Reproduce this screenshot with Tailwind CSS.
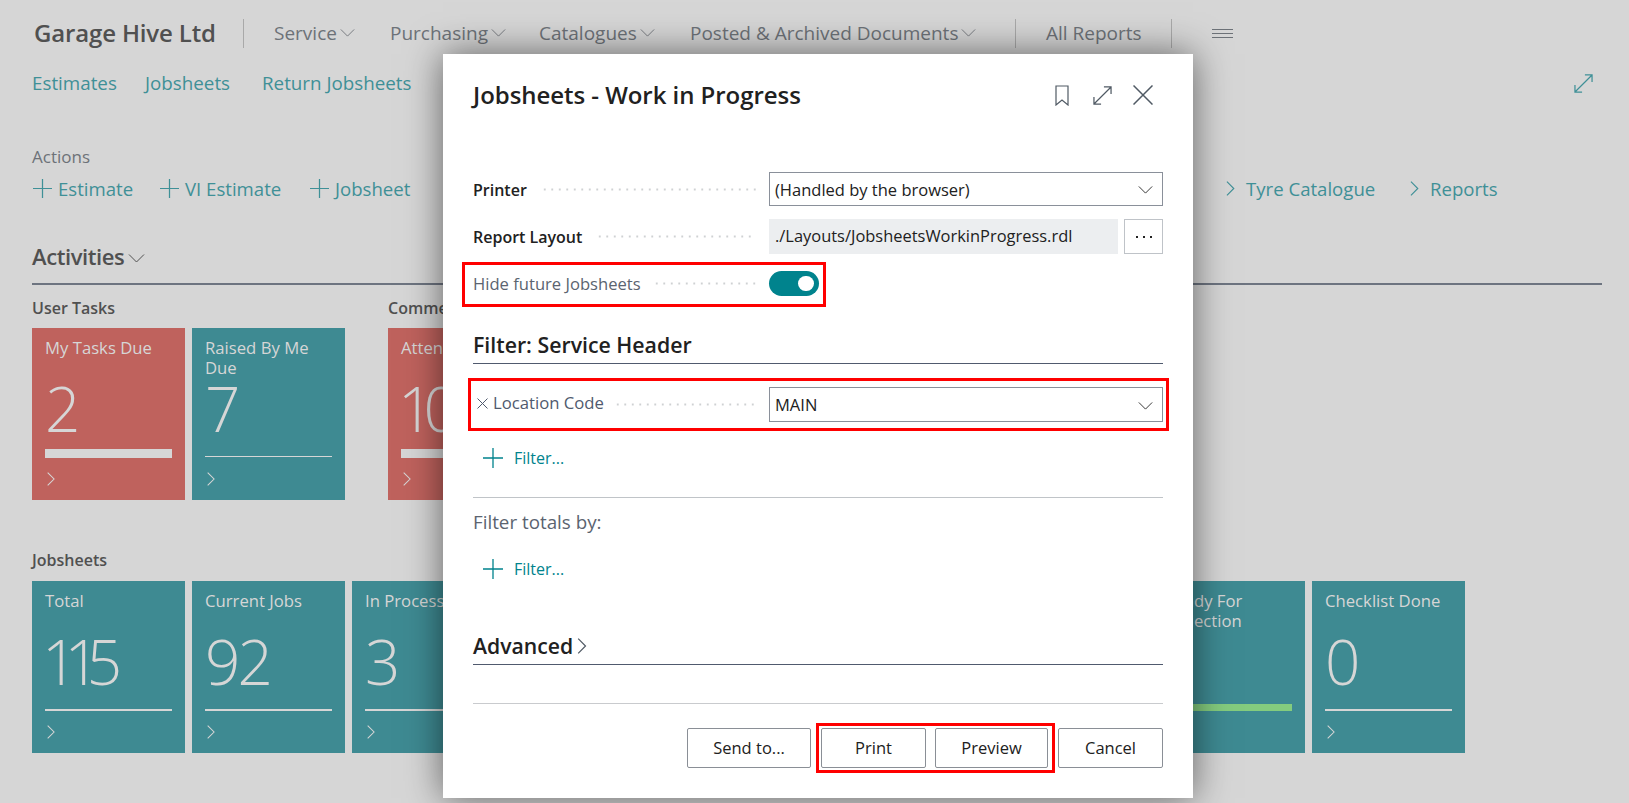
<!DOCTYPE html>
<html lang="en">
<head>
  <meta charset="utf-8">
  <title>Jobsheets - Work in Progress</title>
  <script src="https://cdn.jsdelivr.net/npm/@tailwindcss/browser@4"></script>
</head>
<body class="bg-[#d6d6d6] font-['Open_Sans','Noto_Sans',sans-serif] overflow-hidden">
  <!-- shared icons -->
  <svg class="hidden">
    <symbol id="down" viewBox="0 0 16 9"><path d="M.5.5 8 8 15.500.5" fill="none" stroke="currentColor"/></symbol>
    <symbol id="right" viewBox="0 0 9 16"><path d="M.7.7 8 8 .7 15.300" fill="none" stroke="currentColor" stroke-width="1.200"/></symbol>
    <symbol id="plus" viewBox="0 0 20 20"><path d="M10 0v20M0 10h20" fill="none" stroke="currentColor" stroke-width="1.300"/></symbol>
    <symbol id="expand" viewBox="0 0 20 20"><path d="M1 19 19 1M11.500 1H19v7.500M1 11.500V19h7.500" fill="none" stroke="currentColor" stroke-width="1.300"/></symbol>
  </svg>

  <div class="relative w-[1629px] h-[803px] overflow-hidden">
    <!-- Top bar -->
    <div class="h-[66px] flex items-center pl-[34px] text-[19px] text-[#6d7278]">
      <div class="w-[209px] text-[24px] font-semibold text-[#505050] tracking-[-0.15px]">Garage Hive Ltd</div>
      <div class="w-px h-[29px] bg-[#a9a9a9] mr-[30px]"></div>
      <div class="w-[116px] flex items-center gap-[3px]">Service<svg class="w-[15px] h-[8px]"><use href="#down"/></svg></div>
      <div class="w-[149px] flex items-center gap-[3px]">Purchasing<svg class="w-[15px] h-[8px]"><use href="#down"/></svg></div>
      <div class="w-[151px] flex items-center gap-[3px]">Catalogues<svg class="w-[15px] h-[8px]"><use href="#down"/></svg></div>
      <div class="w-[325px] flex items-center gap-[3px]">Posted &amp; Archived Documents<svg class="w-[15px] h-[8px]"><use href="#down"/></svg></div>
      <div class="w-px h-[29px] bg-[#a9a9a9] mr-[30px]"></div>
      <div class="w-[125px]">All Reports</div>
      <div class="w-px h-[29px] bg-[#a9a9a9] mr-[40px]"></div>
      <div class="flex flex-col gap-[3px] w-[21px]">
        <div class="h-px bg-[#6d7278]"></div><div class="h-px bg-[#6d7278]"></div><div class="h-px bg-[#6d7278]"></div>
      </div>
    </div>

    <!-- Navigation -->
    <div class="h-[34px] flex items-center pl-[32px] pr-[36px] text-[18.800px] text-[#3f9097]">
      <div class="w-[113px]">Estimates</div>
      <div class="w-[117px]">Jobsheets</div>
      <div>Return Jobsheets</div>
      <svg class="ml-auto w-[19px] h-[19px]"><use href="#expand"/></svg>
    </div>

    <!-- Actions -->
    <div class="pl-[32px] pt-[45px] text-[17px] leading-[24px] text-[#6d7278]">Actions</div>
    <div class="h-[36px] mt-[2px] flex items-center pl-[33px] text-[18.600px] text-[#3f9097]">
      <div class="w-[1193px] flex items-center">
        <div class="w-[127px] flex items-center gap-[6px]"><svg class="w-[19px] h-[19px]"><use href="#plus"/></svg>Estimate</div>
        <div class="w-[150px] flex items-center gap-[6px]"><svg class="w-[19px] h-[19px]"><use href="#plus"/></svg>VI Estimate</div>
        <div class="flex items-center gap-[6px]"><svg class="w-[19px] h-[19px]"><use href="#plus"/></svg>Jobsheet</div>
      </div>
      <div class="w-[184px] flex items-center gap-[11px]"><svg class="w-[9px] h-[15px]"><use href="#right"/></svg>Tyre Catalogue</div>
      <div class="flex items-center gap-[11px]"><svg class="w-[9px] h-[15px]"><use href="#right"/></svg>Reports</div>
    </div>

    <!-- Activities -->
    <div class="mx-[32px] w-[1570px] h-[52px] mt-[26px] flex items-end gap-[4px] border-b-2 border-[#6d7480] pb-[12px] text-[22px] leading-[30px] font-semibold text-[#505050]">
      <span class="tracking-[-0.4px]">Activities</span><svg class="w-[17px] h-[9px] mb-[8px] font-normal"><use href="#down"/></svg>
    </div>

    <div class="pl-[32px] flex mt-[13px] text-[#d6d6d6]">
      <div class="w-[356px]">
        <div class="h-[20px] leading-[20px] text-[16px] font-semibold text-[#505050] mb-[10px]">User Tasks</div>
        <div class="flex gap-[7px]">
          <div class="w-[153px] h-[172px] bg-[#bf625d] px-[13px] pt-[10px]">
            <div class="h-[40px] text-[16.700px] leading-[20px]">My Tasks Due</div>
            <div class="h-[70px] text-[62px] leading-[60px] font-light">2</div>
            <div class="h-[10px] flex items-end"><div class="h-[9px] w-full bg-[#d6d6d6]"></div></div>
            <svg class="w-[8px] h-[14px] mt-[14px] ml-[2px]"><use href="#right"/></svg>
          </div>
          <div class="w-[153px] h-[172px] bg-[#3e8a92] px-[13px] pt-[10px]">
            <div class="h-[40px] text-[16.700px] leading-[20px]">Raised By Me Due</div>
            <div class="h-[70px] text-[62px] leading-[60px] font-light">7</div>
            <div class="h-[10px] flex items-end"><div class="h-px w-full bg-[#d6d6d6] mb-[1px]"></div></div>
            <svg class="w-[8px] h-[14px] mt-[14px] ml-[2px]"><use href="#right"/></svg>
          </div>
        </div>
      </div>
      <div>
        <div class="h-[20px] leading-[20px] text-[16px] font-semibold text-[#505050] mb-[10px]">Commercial</div>
        <div class="w-[153px] h-[172px] bg-[#bf625d] px-[13px] pt-[10px]">
          <div class="h-[40px] text-[16.700px] leading-[20px]">Attention</div>
          <div class="h-[70px] text-[62px] leading-[60px] font-light tracking-[-10px] -ml-[3px]">10</div>
          <div class="h-[10px] flex items-end"><div class="h-[9px] w-full bg-[#d6d6d6]"></div></div>
          <svg class="w-[8px] h-[14px] mt-[14px] ml-[2px]"><use href="#right"/></svg>
        </div>
      </div>
    </div>

    <div class="pl-[32px] mt-[50px] text-[#d6d6d6]">
      <div class="h-[20px] leading-[20px] text-[16px] font-semibold text-[#505050] mb-[11px]">Jobsheets</div>
      <div class="flex gap-[7px]">
        <div class="w-[153px] h-[172px] bg-[#3e8a92] px-[13px] pt-[10px]">
          <div class="h-[40px] text-[16.700px] leading-[20px]">Total</div>
          <div class="h-[70px] text-[62px] leading-[60px] font-light tracking-[-13px] -ml-[3px]">115</div>
          <div class="h-[10px] flex items-end"><div class="h-[2px] w-full bg-[#d6d6d6]"></div></div>
          <svg class="w-[8px] h-[14px] mt-[14px] ml-[2px]"><use href="#right"/></svg>
        </div>
        <div class="w-[153px] h-[172px] bg-[#3e8a92] px-[13px] pt-[10px]">
          <div class="h-[40px] text-[16.700px] leading-[20px]">Current Jobs</div>
          <div class="h-[70px] text-[62px] leading-[60px] font-light tracking-[-3px]">92</div>
          <div class="h-[10px] flex items-end"><div class="h-[2px] w-full bg-[#d6d6d6]"></div></div>
          <svg class="w-[8px] h-[14px] mt-[14px] ml-[2px]"><use href="#right"/></svg>
        </div>
        <div class="w-[153px] h-[172px] bg-[#3e8a92] px-[13px] pt-[10px]">
          <div class="h-[40px] text-[16.700px] leading-[20px]">In Process</div>
          <div class="h-[70px] text-[62px] leading-[60px] font-light">3</div>
          <div class="h-[10px] flex items-end"><div class="h-[2px] w-full bg-[#d6d6d6]"></div></div>
          <svg class="w-[8px] h-[14px] mt-[14px] ml-[2px]"><use href="#right"/></svg>
        </div>
        <!-- tiles hidden behind the dialog -->
        <div class="w-[153px] h-[172px] bg-[#3e8a92]"></div>
        <div class="w-[153px] h-[172px] bg-[#3e8a92]"></div>
        <div class="w-[153px] h-[172px] bg-[#3e8a92]"></div>
        <div class="w-[153px] h-[172px] bg-[#3e8a92]"></div>
        <div class="w-[153px] h-[172px] bg-[#3e8a92] px-[13px] pt-[10px]">
          <div class="h-[40px] text-[16.700px] leading-[20px]">Ready For Collection</div>
          <div class="h-[70px]"></div>
          <div class="h-[10px] flex items-end"><div class="h-[7px] w-full bg-[#84cc7e]"></div></div>
          <svg class="w-[8px] h-[14px] mt-[14px] ml-[2px]"><use href="#right"/></svg>
        </div>
        <div class="w-[153px] h-[172px] bg-[#3e8a92] px-[13px] pt-[10px]">
          <div class="h-[40px] text-[16.700px] leading-[20px]">Checklist Done</div>
          <div class="h-[70px] text-[62px] leading-[60px] font-light">0</div>
          <div class="h-[10px] flex items-end"><div class="h-[2px] w-full bg-[#d6d6d6]"></div></div>
          <svg class="w-[8px] h-[14px] mt-[14px] ml-[2px]"><use href="#right"/></svg>
        </div>
      </div>
    </div>

    <!-- Dialog -->
    <div class="absolute left-[443px] top-[54px] w-[750px] h-[744px] bg-white shadow-[0_0_35px_rgba(0,0,0,0.55)] px-[30px] text-[#212121]">
      <div class="h-[80px] pt-[2px] flex items-center">
        <div class="text-[24px] font-semibold tracking-[-0.05px]">Jobsheets - Work in Progress</div>
        <div class="ml-auto flex items-center text-[#505a64]">
          <svg class="w-[14px] h-[21px]" viewBox="0 0 14 21"><path d="M1 1h12v19l-6-5-6 5z" fill="none" stroke="currentColor" stroke-width="1.200"/></svg>
          <svg class="w-[19px] h-[19px] ml-[24px]"><use href="#expand"/></svg>
          <svg class="w-[20px] h-[20px] ml-[21px] mr-[10px]" viewBox="0 0 20 20"><path d="M.5.5l19 19M19.500.5l-19 19" fill="none" stroke="currentColor" stroke-width="1.500"/></svg>
        </div>
      </div>

      <div class="mt-[38px] h-[34px] flex items-center text-[16px]">
        <div class="font-semibold pt-[2px]">Printer</div>
        <div class="flex-1 h-[3px] ml-[14px] mr-[13px] bg-[radial-gradient(circle,#cfd1d3_1px,transparent_1.200px)] bg-[length:7.500px_3px]"></div>
        <div class="w-[394px] h-[34px] border border-[#8a909a] flex items-center px-[5px] pt-[2px] text-[16.500px]">(Handled by the browser)<svg class="ml-auto mr-[4px] w-[15px] h-[8px]"><use href="#down"/></svg></div>
      </div>
      <div class="mt-[13px] h-[35px] flex items-center text-[16px]">
        <div class="font-semibold">Report Layout</div>
        <div class="flex-1 h-[3px] ml-[14px] mr-[13px] bg-[radial-gradient(circle,#cfd1d3_1px,transparent_1.200px)] bg-[length:7.500px_3px]"></div>
        <div class="w-[349px] h-[35px] bg-[#eceef0] flex items-center px-[6px] text-[16.450px]">./Layouts/JobsheetsWorkinProgress.rdl</div>
        <div class="w-[39px] h-[35px] ml-[6px] border border-[#bfc3c8] flex items-center justify-center gap-[5px]">
          <i class="w-[2px] h-[2px] bg-[#212121]"></i><i class="w-[2px] h-[2px] bg-[#212121]"></i><i class="w-[2px] h-[2px] bg-[#212121]"></i>
        </div>
      </div>
      <div class="mt-[17px] h-[25px] flex items-center text-[16.600px] text-[#5b6470]">
        <div class="pt-[2px]">Hide future Jobsheets</div>
        <div class="flex-1 h-[3px] ml-[12px] mr-[13px] bg-[radial-gradient(circle,#cfd1d3_1px,transparent_1.200px)] bg-[length:7.500px_3px]"></div>
        <div class="w-[394px]">
          <div class="w-[50px] h-[25px] rounded-full bg-[#00838d] flex items-center justify-end pr-[5px]"><div class="w-[16px] h-[15px] rounded-full bg-white"></div></div>
        </div>
      </div>

      <div class="mt-[32px] h-[36px] pt-[4px] border-b border-[#505a6e] text-[21.300px] leading-[26px] font-semibold">Filter: Service Header</div>

      <div class="mt-[23px] h-[35px] flex items-center text-[16.700px] text-[#505a6e]">
        <svg class="w-[11px] h-[11px] ml-[4px] mr-[5px] -mt-[3px]" viewBox="0 0 11 11"><path d="M.5.5l10 10M10.500.5l-10 10" fill="none" stroke="currentColor"/></svg>
        <div class="-mt-[3px]">Location Code</div>
        <div class="flex-1 h-[3px] ml-[10px] mr-[13px] bg-[radial-gradient(circle,#cfd1d3_1px,transparent_1.200px)] bg-[length:7.500px_3px]"></div>
        <div class="w-[394px] h-[35px] border border-[#8a909a] flex items-center px-[5px] pt-[2px] text-[16.500px] text-[#212121]">MAIN<svg class="ml-auto mr-[4px] w-[15px] h-[8px]"><use href="#down"/></svg></div>
      </div>

      <div class="mt-[20px] h-[32px] flex items-center pl-[10px] gap-[11px] text-[16px] text-[#00838d]"><svg class="w-[20px] h-[20px]"><use href="#plus"/></svg>Filter...</div>

      <div class="mt-[23px] border-t border-[#c0c4c8] pt-[12px] h-[26px] leading-[24px] text-[18.800px] text-[#5b6470]">Filter totals by:</div>

      <div class="mt-[30px] h-[32px] flex items-center pl-[10px] gap-[11px] text-[16px] text-[#00838d]"><svg class="w-[20px] h-[20px]"><use href="#plus"/></svg>Filter...</div>

      <div class="mt-[40px] h-[40px] border-b border-[#505a6e] flex items-start gap-[4px] text-[21.200px] leading-[30px] font-semibold pt-[6px]">Advanced<svg class="w-[10px] h-[16px] mt-[7px] text-[#505a64]"><use href="#right"/></svg></div>

      <div class="mt-[38px] border-t border-[#c9cbce] pt-[24px] flex justify-end text-[16.500px] font-medium">
        <div class="w-[124px] h-[40px] border border-[#8a8f96] rounded-[2px] flex items-center justify-center">Send to...</div>
        <div class="w-[105px] h-[40px] ml-[10px] border border-[#8a8f96] rounded-[2px] flex items-center justify-center">Print</div>
        <div class="w-[113px] h-[40px] ml-[9px] border border-[#8a8f96] rounded-[2px] flex items-center justify-center">Preview</div>
        <div class="w-[105px] h-[40px] ml-[10px] border border-[#8a8f96] rounded-[2px] flex items-center justify-center">Cancel</div>
      </div>

      <!-- red annotation boxes drawn over the screenshot -->
      <div class="absolute left-[19px] top-[208px] w-[364px] h-[45px] border-[3px] border-[#ff0000]"></div>
      <div class="absolute left-[25px] top-[324px] w-[701px] h-[53px] border-[3px] border-[#ff0000]"></div>
      <div class="absolute left-[373px] top-[669px] w-[239px] h-[50px] border-[3px] border-[#ff0000]"></div>
    </div>
  </div>
</body>
</html>
